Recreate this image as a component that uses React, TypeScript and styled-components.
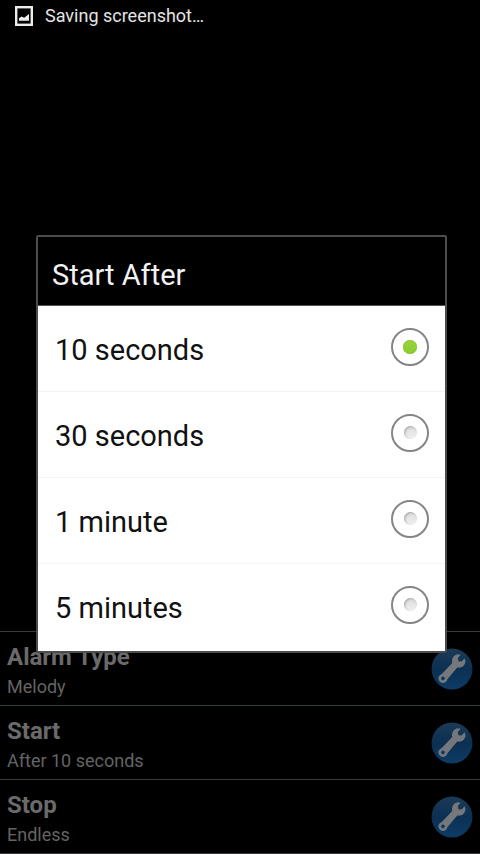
import React, { useState } from "react";
import styled, { createGlobalStyle } from "styled-components";

const GlobalStyle = createGlobalStyle`
  * { box-sizing: border-box; }
  body {
    margin: 0;
    background: #000;
    font-family: Roboto, "Noto Sans", sans-serif;
  }
`;

const Screen = styled.div`
  display: flex;
  flex-direction: column;
  justify-content: space-between;
  min-height: 100vh;
  background: #000;
`;

const StatusBar = styled.header`
  display: flex;
  align-items: center;
  gap: 12px;
  height: 32px;
  padding: 0 15px;
  color: #e4e4e4;
  font-size: 18px;
  line-height: 32px;
`;

const SettingsList = styled.ul`
  margin: 0;
  padding: 0;
  list-style: none;
  border-bottom: 1px solid #363e40;
`;

const SettingRow = styled.li`
  display: flex;
  align-items: center;
  justify-content: space-between;
  height: 74px;
  padding: 0 7px;
  border-top: 1px solid #363e40;
`;

const SettingText = styled.div`
  padding-top: 4px;
`;

const SettingTitle = styled.h2`
  margin: 0;
  color: #6a6a6a;
  font-size: 24px;
  font-weight: 700;
  line-height: 32px;
`;

const SettingValue = styled.p`
  margin: 0;
  color: #646464;
  font-size: 18px;
  line-height: 28px;
`;

const EditButton = styled.button`
  display: flex;
  padding: 0;
  border: 0;
  background: none;
`;

const Overlay = styled.div`
  position: fixed;
  inset: 0;
  display: flex;
  align-items: center;
  padding: 34px 33px 0 36px;
`;

const Dialog = styled.section`
  flex: 1;
  padding-bottom: 1px;
  border: 2px solid #4c4c4c;
  border-radius: 2px;
  background: #fff;
`;

const DialogTitle = styled.h1`
  margin: 0;
  padding: 8px 14px 0;
  border-bottom: 1px solid #555;
  background: #000;
  color: #f2f2f2;
  font-size: 29px;
  font-weight: 400;
  line-height: 60px;
`;

const Option = styled.label`
  display: flex;
  align-items: center;
  justify-content: space-between;
  height: 86px;
  padding: 0 16px 0 17px;
  border-bottom: 1px solid #f3f3f3;
  color: #111;
  font-size: 29px;
  line-height: 40px;

  &:last-child {
    border-bottom-color: transparent;
  }
`;

const OptionText = styled.span`
  padding-top: 3px;
`;

const Radio = styled.input`
  appearance: none;
  display: grid;
  place-items: center;
  width: 38px;
  height: 38px;
  margin: 0 0 4px;
  border: 2px solid #858585;
  border-radius: 50%;
  background: #fff;

  &::before {
    content: "";
    width: 13px;
    height: 13px;
    border-radius: 50%;
    background: linear-gradient(#dcdcdc, #f0f0f0);
    box-shadow: inset 1px 1px 2px #aaa;
  }

  &:checked::before {
    width: 14px;
    height: 14px;
    background: linear-gradient(#98d43c, #88cc2c);
    box-shadow: inset 0 0 1px #6a9a2a;
  }
`;

const PictureIcon = () => (
  <svg width="18" height="20" viewBox="0 0 18 20" aria-hidden="true">
    <rect x="1.2" y="1.2" width="15.6" height="17.6" fill="none" stroke="#ececec" strokeWidth="2.4" />
    <path d="M4 14.8V12.2l2.6-1.8 2.6 1.4L14 8v6.8z" fill="#ececec" />
  </svg>
);

const WrenchIcon = () => (
  <svg width="42" height="42" viewBox="0 0 42 42" aria-hidden="true">
    <defs>
      <linearGradient id="disc" x1="0" y1="0" x2="0" y2="1">
        <stop offset="0" stopColor="#1b3a56" />
        <stop offset="0.5" stopColor="#0c3052" />
        <stop offset="1" stopColor="#0d3c66" />
      </linearGradient>
    </defs>
    <circle cx="21" cy="21" r="20.5" fill="url(#disc)" />
    <path
      transform="translate(20 21.5) rotate(42)"
      fill="#74777c"
      fillRule="evenodd"
      d="M-2.6-17.4V-13L0-11.2 2.6-13V-17.4C5.6-16.4 7-14 6.8-11.2 6.6-8.8 5.4-7 3.4-5.6L3.8 9.6C5.6 13.2 3.6 16.4 0 16.4S-5.6 13.2-3.8 9.6L-3.4-5.6C-5.4-7-6.6-8.8-6.8-11.2-7-14-5.6-16.4-2.6-17.4ZM0 10.2A1.8 1.8 0 1 0 0 13.8 1.8 1.8 0 1 0 0 10.2Z"
    />
  </svg>
);

const options = ["10 seconds", "30 seconds", "1 minute", "5 minutes"];

export default function App() {
  const [selected, setSelected] = useState(options[0]);
  const settings = [
    { title: "Alarm Type", value: "Melody" },
    { title: "Start", value: "After 10 seconds" },
    { title: "Stop", value: "Endless" },
  ];

  return (
    <>
      <GlobalStyle />
      <Screen>
        <StatusBar>
          <PictureIcon />
          <span>Saving screenshot…</span>
        </StatusBar>
        <SettingsList>
          {settings.map(({ title, value }) => (
            <SettingRow key={title}>
              <SettingText>
                <SettingTitle>{title}</SettingTitle>
                <SettingValue>{value}</SettingValue>
              </SettingText>
              <EditButton type="button" aria-label={`Edit ${title}`}>
                <WrenchIcon />
              </EditButton>
            </SettingRow>
          ))}
        </SettingsList>
      </Screen>
      <Overlay>
        <Dialog role="dialog" aria-modal="true" aria-labelledby="dialog-title">
          <DialogTitle id="dialog-title">Start After</DialogTitle>
          {options.map((option) => (
            <Option key={option}>
              <OptionText>{option}</OptionText>
              <Radio
                type="radio"
                name="start-after"
                value={option}
                checked={selected === option}
                onChange={() => setSelected(option)}
              />
            </Option>
          ))}
        </Dialog>
      </Overlay>
    </>
  );
}
